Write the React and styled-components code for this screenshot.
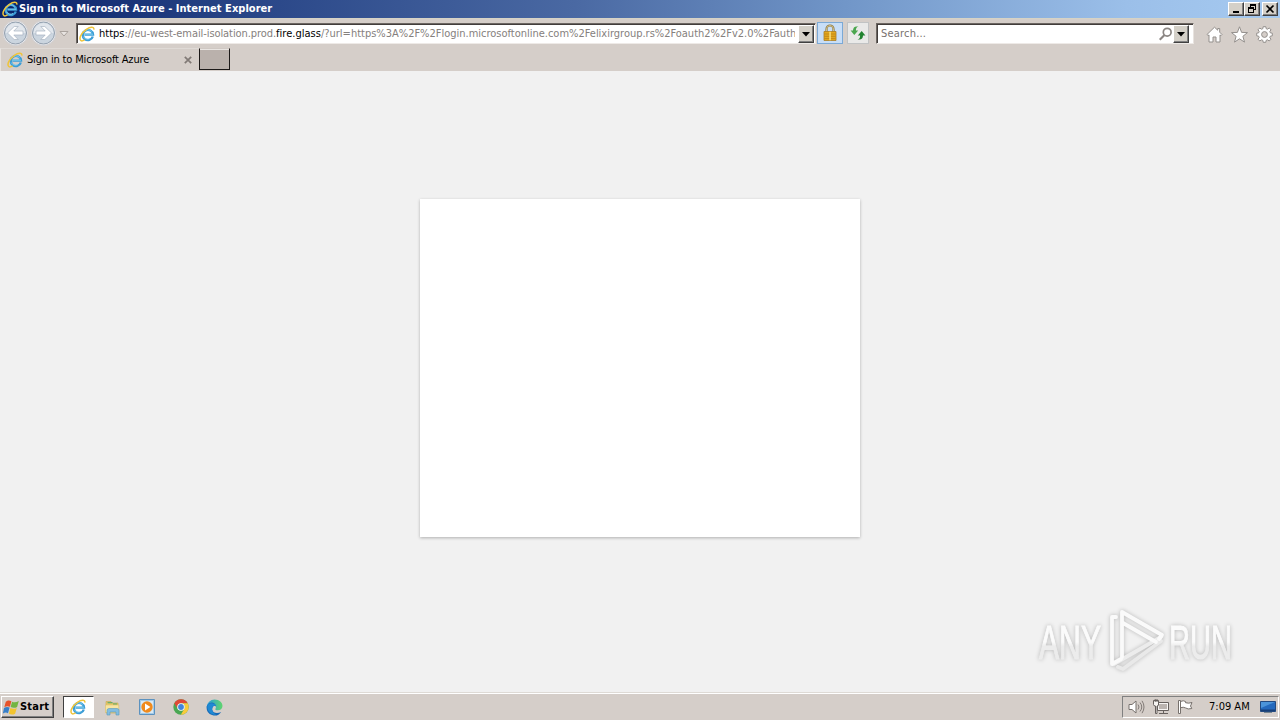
import React from 'react';
import styled, { createGlobalStyle, css } from 'styled-components';

const Global = createGlobalStyle`
  * { box-sizing: border-box; }
  body { margin: 0; overflow: hidden; }
  svg { display: block; flex: none; }
`;

const raised = css`
  background: #d4d0c8;
  border: 1px solid;
  border-color: #fff #404040 #404040 #fff;
  box-shadow: inset -1px -1px 0 #808080;
`;

const Screen = styled.div`
  width: 1280px;
  height: 720px;
  display: flex;
  flex-direction: column;
  background: #f1f1f1;
  font: 11px/14px 'DejaVu Sans Condensed', 'DejaVu Sans', sans-serif;
  font-stretch: condensed;
  color: #000;
`;
const Label = styled.span`
  white-space: pre;
  font-weight: ${p => (p.$bold ? 700 : 400)};
  letter-spacing: ${p => p.$track || 0}px;
  color: ${p => p.$color || 'inherit'};
`;
const TitleBar = styled.header`
  height: 18px;
  flex: none;
  display: flex;
  align-items: center;
  padding: 0 2px 0 2px;
  gap: 1px;
  color: #fff;
  background: linear-gradient(90deg, #0a246a 0%, #2b4889 21%, #4a69a3 45%, #7196c8 66%, #9bbfe9 88%, #a6caf0 100%);
`;
const WindowButtons = styled.div`
  display: flex;
  margin-left: auto;
`;
const WindowButton = styled.div`
  ${raised}
  width: 16px;
  height: 14px;
  display: grid;
  place-items: center;
  margin-left: ${p => p.$gap || 0}px;
`;
const Toolbar = styled.div`
  height: 30px;
  flex: none;
  display: flex;
  align-items: flex-start;
  padding: 4px 7px 0 3px;
  background: #d5cec9;
  border-top: 1px solid #d6d3c5;
`;
const NavButtons = styled.div`
  display: flex;
  width: 73px;
  margin-top: -5px;
`;
const Field = styled.div`
  flex: none;
  display: flex;
  align-items: center;
  width: ${p => p.$width}px;
  height: 21px;
  background: #fff;
  border: 1px solid;
  border-color: #6c6662 #e8e3df #eeeae7 #6c6662;
  box-shadow: inset 1px 1px 0 #423d3b;
  padding: 1px ${p => p.$end}px 0 ${p => p.$start}px;
  margin-right: ${p => p.$gap}px;
`;
const Url = styled.div`
  flex: 1;
  overflow: hidden;
  white-space: pre;
  margin: 0 3px;
`;
const Address = styled(Url)`
  margin-left: 4px;
`;
const DropButton = styled.div`
  ${raised}
  width: 16px;
  height: 18px;
  display: grid;
  place-items: center;
`;
const ToolButton = styled.div`
  flex: none;
  width: ${p => p.$width}px;
  height: 22px;
  margin: -1px ${p => p.$gap}px 0 0;
  display: grid;
  place-items: center;
  border: 1px solid ${p => (p.$active ? '#7ba9d6' : '#c1c3c4')};
  background: ${p => (p.$active ? '#c8def7' : '#e9e9e8')};
`;
const Commands = styled.div`
  display: flex;
  gap: 8px;
  margin-top: 3px;
`;
const TabStrip = styled.div`
  height: 23px;
  flex: none;
  display: flex;
  background: #d5cec9;
`;
const Tab = styled.div`
  width: 199px;
  display: flex;
  align-items: center;
  gap: 4px;
  padding: 0 7px 0 6px;
  border-left: 1px solid #e8e4e0;
  border-top: 1px solid #dfdad6;
  & > svg:last-child { margin-left: auto; }
`;
const NewTab = styled.div`
  width: 31px;
  height: 22px;
  background: #bab1ac;
  border: 1px solid #1c1918;
  border-top-color: #cfc8c3;
  box-shadow: inset 0 1px 0 #e9e5e2;
`;
const Page = styled.main`
  flex: 1;
  display: flex;
  justify-content: center;
  align-items: flex-start;
  padding-top: 128px;
  position: relative;
  background: #f1f1f1;
`;
const Card = styled.section`
  width: 440px;
  height: 338px;
  background: #fff;
  box-shadow: 0 1px 3px rgba(0, 0, 0, 0.27);
`;
const Watermark = styled.div`
  position: absolute;
  left: 1030px;
  top: 529px;
`;
const Taskbar = styled.footer`
  height: 28px;
  flex: none;
  display: flex;
  align-items: center;
  background: #d5cec9;
  border-top: 1px solid #dedad5;
  box-shadow: inset 0 1px 0 #fff;
  padding: 1px 1px 0 1px;
`;
const StartButton = styled.div`
  ${raised}
  background: #d5cec9;
  width: 53px;
  height: 22px;
  display: flex;
  align-items: center;
  padding-left: 1px;
  gap: 1px;
`;
const TaskItems = styled.div`
  display: flex;
  margin-left: 9px;
  gap: 3px;
`;
const TaskItem = styled.div`
  width: 31px;
  height: 22px;
  display: grid;
  place-items: center;
  ${p => p.$active && css`
    padding-right: 1px;
    background: #fff;
    border: 1px solid;
    border-color: #404040 #fff #fff #404040;
  `}
`;
const Tray = styled.div`
  margin-left: auto;
  width: 157px;
  height: 22px;
  display: flex;
  align-items: center;
  border: 1px solid;
  border-color: #808080 #fff #fff #808080;
  padding: 0 2px 0 5px;
  gap: 8px;
`;
const Clock = styled.div`
  margin-left: 7px;
  flex: 1;
`;

const IELogo = ({ size = 16 }) => (
  <svg width={size} height={size} viewBox="0 0 16 16" fill="none">
    <path d="M13.8 10.5A5.1 5.1 0 1 1 14 8.6H5.5" stroke="#3c9dd6" strokeWidth="2.4" />
    <path d="M14 8.2H5.5M12.7 6A4.7 4.7 0 0 0 4.5 6.3M4.3 10.6a4.7 4.7 0 0 0 6.7 1.9" stroke="#83d3f3" strokeWidth=".9" />
    <path d="M2 14.7C-.8 12.3 2.8 6.6 7.4 3.4 11 .9 15.3.2 14.8 3.6M2 14.7c1 .5 2.4-.1 3.6-.8" stroke="#efc43a" strokeWidth="1.5" />
  </svg>
);

const NavCircle = ({ back }) => (
  <svg width="28" height="30" viewBox="0 0 28 30">
    <circle cx="12.5" cy="15" r="12.5" fill="#f0eff0" stroke="#d0cfd2" />
    <circle cx="12.5" cy="15" r="11" fill="#cbd5df" stroke="#929fae" />
    <path d="M2.5 15a10 10 0 0 1 20 0Z" fill="#e1e6ec" />
    <g transform={back ? 'translate(-.5 0)' : 'matrix(-1 0 0 1 25.5 0)'}>
      <path d="M5 15l6.7-6.5h4L11.3 13h9.2v4h-9.2l4.4 4.5h-4Z" fill="#fff" stroke="#a7b3c1" strokeWidth=".7" />
    </g>
  </svg>
);

const Caret = () => (
  <svg width="8" height="5" viewBox="0 0 8 5"><path d="M0 0h8L4 4.5Z" fill="#000" /></svg>
);
const Minimize = () => (
  <svg width="12" height="10" shapeRendering="crispEdges"><path d="M3 7h6v2H3z" /></svg>
);
const Restore = () => (
  <svg width="12" height="10" fill="none" stroke="#000" shapeRendering="crispEdges">
    <path d="M4.5 3V.5h5v5H8M4 1.5h6M2.5 3.5h5v5h-5zM2 4.5h6" />
  </svg>
);
const Close = () => (
  <svg width="12" height="10"><path d="M2.5 1.5l7 7m0-7l-7 7" stroke="#000" strokeWidth="1.7" /></svg>
);
const Lock = () => (
  <svg width="16" height="18" viewBox="0 0 16 18">
    <path d="M4.5 8V5.2a3.5 3.7 0 0 1 7 0V8" fill="none" stroke="#8a7645" strokeWidth="2.2" />
    <path d="M4.5 8V5.2a3.5 3.7 0 0 1 7 0V8" fill="none" stroke="#e5d498" strokeWidth=".8" />
    <path d="M2 7.5h12v9H2z" fill="#e5a81c" stroke="#a97e24" strokeWidth=".8" />
    <path d="M2.4 10h11.2M2.4 12.3h11.2M2.4 14.6h11.2" stroke="#b98218" strokeWidth=".8" />
    <path d="M7.3 7.8h1.5v8.4H7.3z" fill="#fae17c" />
  </svg>
);
const Refresh = () => (
  <svg width="16" height="16" viewBox="0 0 16 16">
    <path d="M8.5 1.8C6.4 2 5.9 3.4 5.9 5.6H8.2L4.3 10 .6 5.6H3C3 2.3 5.2.7 8.5 1.8Z" fill="#4aa64e" />
    <path d="M7.5 14.2c2.1-.2 2.6-1.6 2.6-3.8H7.8L11.7 6l3.7 4.4H13c0 3.3-2.2 4.9-5.5 3.8Z" fill="#218330" />
  </svg>
);
const Magnifier = () => (
  <svg width="14" height="14" viewBox="0 0 14 14" fill="none" stroke="#8b8683">
    <circle cx="8.2" cy="5.2" r="3.9" strokeWidth="1.7" /><path d="M5.5 8L.7 12.8" strokeWidth="2.2" />
  </svg>
);
const CommandIcon = ({ kind }) => (
  <svg width="17" height="17" viewBox="0 0 17 17" fill="#fff" stroke="#94908d" strokeWidth="1" strokeLinejoin="round">
    {kind === 'home' && <path d="M8.5 1.2L1 8.5l1 1.2 1-.8V16h4v-5h3v5h4V8.9l1 .8 1-1.2-2.3-2.3V2.5h-2v1.7Z" />}
    {kind === 'star' && <path d="M8.5.8l2.1 5.6 5.9.2-4.6 3.7 1.6 5.8-5-3.3-5 3.3 1.6-5.8L.5 6.6l5.9-.2Z" />}
    {kind === 'gear' && (
      <>
        <path d="M7.2.7h2.6l.4 2 1.3.5L13.2 2 15 3.8l-1.2 1.7.5 1.3 2 .4v2.6l-2 .4-.5 1.3 1.2 1.7-1.8 1.8-1.7-1.2-1.3.5-.4 2H7.2l-.4-2-1.3-.5L3.8 15 2 13.2l1.2-1.7-.5-1.3-2-.4V7.2l2-.4.5-1.3L2 3.8 3.8 2l1.7 1.2 1.3-.5Z" />
        <circle cx="8.5" cy="8.5" r="2.9" fill="#d5cec9" />
      </>
    )}
  </svg>
);
const WindowsFlag = () => (
  <svg width="16" height="17" viewBox="0 0 16 17">
    <path d="M2.8 2.8C5 .9 6.7 1.4 8.4 2.3L6.9 7.8C5 6.9 3.3 7 1.3 8.2Z" fill="#e6532b" />
    <path d="M9.1 2.7c2 1 4 .8 6.7-.6L14.1 8c-2.2 1.2-4.5 1-6.5.1Z" fill="#73b543" />
    <path d="M1 9C3 7.7 4.8 7.7 6.6 8.6L5 14.2c-1.8-1-3.4-.7-5.2.4Z" fill="#377fc8" />
    <path d="M7.4 9.1c2 1 4.2 1 6.4-.2l-1.7 5.8c-2.2 1.2-4.4 1-6.2 0Z" fill="#f2c42f" />
  </svg>
);
const Folder = () => (
  <svg width="17" height="17" viewBox="0 0 17 17">
    <path d="M2 2.5h5l1 1.5h6V14H2Z" fill="#eac968" stroke="#c9a94f" strokeWidth=".6" />
    <path d="M3.5 3.7h5M9 5h4" stroke="#46a56a" strokeWidth="1.1" />
    <path d="M1.5 6h13.3v7.5H1.5Z" fill="#f7e5a2" stroke="#d9bd6b" strokeWidth=".5" />
    <path d="M3 16v-4.5Q3 9.5 5 9.5h8q2 0 2 2V16h-3v-3H6v3Z" fill="#83bde0" stroke="#579abd" strokeWidth=".6" />
  </svg>
);
const MediaPlayer = () => (
  <svg width="16" height="16" viewBox="0 0 16 16">
    <path d="M.5.5h15v15H.5z" fill="#a4cbe8" stroke="#5c92bf" />
    <path d="M2 2h12v12H2z" fill="#d9e9f4" />
    <circle cx="8" cy="8" r="5.7" fill="#f08a1c" /><path d="M6 4.5l5.4 3.5L6 11.5Z" fill="#fff" />
  </svg>
);
const Chrome = () => (
  <svg width="16" height="16" viewBox="0 0 16 16">
    <circle cx="8" cy="8" r="7.7" fill="#4aa753" />
    <path d="M1.3 4.2A7.7 7.7 0 0 1 14.7 4.3H8A3.7 3.7 0 0 0 4.8 10Z" fill="#df4937" />
    <path d="M14.7 4.3A7.7 7.7 0 0 1 7.8 15.7L11.2 10A3.7 3.7 0 0 0 8 4.3Z" fill="#f9cb3a" />
    <circle cx="8" cy="8" r="3.8" fill="#fff" /><circle cx="8" cy="8" r="2.9" fill="#4285db" />
  </svg>
);
const Edge = () => (
  <svg width="17" height="17" viewBox="0 0 17 17">
    <defs><linearGradient id="edge"><stop stopColor="#2899df" /><stop offset="1" stopColor="#60d56c" /></linearGradient></defs>
    <path d="M.6 8A8 8 0 0 1 8.5.6c5 0 8 3.2 8 6.5 0 2.8-2.2 4.2-4.7 4.2-2.2 0-3-.8-2.2-1.8.8-1.1.4-3.5-2.2-3.5C4 6 .9 7 .6 8Z" fill="url(#edge)" />
    <path d="M.6 8.2C.8 5.2 7-.2 10.3 7.2 7.8 5.4 5.8 8.3 6.2 10.8c.6 3.2 4.8 4.4 9 2.2A8 8 0 0 1 .6 8.2Z" fill="#1769b6" />
    <path d="M1.5 6.2C5 2.8 9.8 4.6 10 7.4 7.8 5.6 5.8 8.3 6.2 10.8c.4 2.3 2 3.8 4 5A8 8 0 0 1 1.5 6.2Z" fill="#2089d3" />
  </svg>
);
const Speaker = () => (
  <svg width="17" height="16" viewBox="0 0 17 16" fill="none" stroke="#77716d">
    <path d="M1 5.5h3L8 2v12l-4-3.5H1Z" fill="#fff" /><path d="M10 5.5q2 2.5 0 5M12 3.5q3.5 4.5 0 9M14 1.8q4 6.2 0 12.4" strokeWidth=".9" />
  </svg>
);
const Network = () => (
  <svg width="16" height="16" viewBox="0 0 16 16" fill="#f7f5f3" stroke="#67615e">
    <path d="M4.5 3.5h11v8h-11z" /><path d="M6 5h8v5H6z" fill="#bbb4b0" stroke="none" />
    <path d="M6 14.5h9M10.5 12v2" /><path d="M.5 1.5h5V6q0 1-1.5 1v7.5H2.5V7Q.5 7 .5 5.5ZM2.2 0v3M4 0v3" />
  </svg>
);
const Flag = () => (
  <svg width="17" height="16" viewBox="0 0 17 16" fill="#fff" stroke="#77716d">
    <path d="M3.5 2.5q3-1.5 5 0v1.2q3 1 6.5-.2L13.5 7l1.3 2.5q-4 1.2-6.3-.6-2-1.2-5-.2Z" /><path d="M1.5 1.5h2v13h-2z" />
  </svg>
);
const Desktop = () => (
  <svg width="16" height="14" viewBox="0 0 16 14">
    <path d="M.5 1.5h15v10H.5z" fill="#2469bd" stroke="#234a80" /><path d="M1 2h14L1 8Z" fill="#4b94da" /><path d="M1 9.5h14V11H1z" fill="#163f77" /><path d="M4 12.5h8" stroke="#77858f" />
  </svg>
);
const AnyRunMark = () => (
  <svg width="212" height="80" viewBox="0 0 212 80" style={{ filter: 'drop-shadow(0 0 2px rgba(0,0,0,.24))' }}>
    <defs>
      <linearGradient id="mark" x1="0" y1="0" x2="0" y2="1">
        <stop offset=".5" stopColor="#fbfbfb" /><stop offset=".58" stopColor="#ececec" />
      </linearGradient>
    </defs>
    <g fill="url(#mark)" stroke="url(#mark)" strokeWidth="1" fontFamily="'Liberation Sans', sans-serif" fontSize="49">
      <text x="9" y="59" textLength="62" lengthAdjust="spacingAndGlyphs">ANY</text>
      <text x="139" y="59" textLength="63" lengthAdjust="spacingAndGlyphs">RUN</text>
    </g>
    <g fill="none" strokeWidth="3.8" strokeLinejoin="round" strokeLinecap="round">
      <path d="M84 64L131 37" stroke="#ececec" />
      <path d="M131 41L93 69l-5-2" stroke="#e9e9e9" />
      <path d="M86 17h-4V64l9-5M92 57V12l40 23-3 4M93 23l33 19" stroke="#fafafa" />
    </g>
  </svg>
);

export default function App() {
  return (
    <Screen>
      <Global />
      <TitleBar>
        <IELogo />
        <Label $bold $track={0.03}>Sign in to Microsoft Azure - Internet Explorer</Label>
        <WindowButtons>
          <WindowButton><Minimize /></WindowButton>
          <WindowButton><Restore /></WindowButton>
          <WindowButton $gap={2}><Close /></WindowButton>
        </WindowButtons>
      </TitleBar>
      <Toolbar>
        <NavButtons>
          <NavCircle back /><NavCircle />
          <svg width="10" height="30"><path d="M1 13.5h8L5 18Z" fill="#e8e4e1" stroke="#aaa39e" /></svg>
        </NavButtons>
        <Field $width={740} $start={2} $end={1} $gap={1}>
          <IELogo />
          <Address>
            <Label>https</Label><Label $color="#85807d" $track={-0.08}>://eu-west-email-isolation.prod.</Label><Label $track={0.03}>fire.glass</Label>
            <Label $color="#85807d" $track={-0.01}>/?url=https%3A%2F%2Flogin.microsoftonline.com%2Felixirgroup.rs%2Foauth2%2Fv2.0%2Fauth</Label>
          </Address>
          <DropButton><Caret /></DropButton>
        </Field>
        <ToolButton $active $width={26} $gap={4}><Lock /></ToolButton>
        <ToolButton $width={22} $gap={7}><Refresh /></ToolButton>
        <Field $width={318} $start={1} $end={4} $gap={12}>
          <Url><Label $color="#77716e" $track={0.2}>Search...</Label></Url>
          <Magnifier />
          <DropButton><Caret /></DropButton>
        </Field>
        <Commands>
          <CommandIcon kind="home" /><CommandIcon kind="star" /><CommandIcon kind="gear" />
        </Commands>
      </Toolbar>
      <TabStrip>
        <Tab>
          <IELogo />
          <Label $track={-0.16}>Sign in to Microsoft Azure</Label>
          <svg width="8" height="8"><path d="M.8.8l6.4 6.4m0-6.4L.8 7.2" stroke="#817a76" strokeWidth="1.7" /></svg>
        </Tab>
        <NewTab />
      </TabStrip>
      <Page>
        <Card />
        <Watermark><AnyRunMark /></Watermark>
      </Page>
      <Taskbar>
        <StartButton><WindowsFlag /><Label $bold $track={0.2}>Start</Label></StartButton>
        <TaskItems>
          <TaskItem $active><IELogo /></TaskItem>
          <TaskItem><Folder /></TaskItem>
          <TaskItem><MediaPlayer /></TaskItem>
          <TaskItem><Chrome /></TaskItem>
          <TaskItem><Edge /></TaskItem>
        </TaskItems>
        <Tray>
          <Speaker /><Network /><Flag />
          <Clock><Label>7:09 AM</Label></Clock>
          <Desktop />
        </Tray>
      </Taskbar>
    </Screen>
  );
}
